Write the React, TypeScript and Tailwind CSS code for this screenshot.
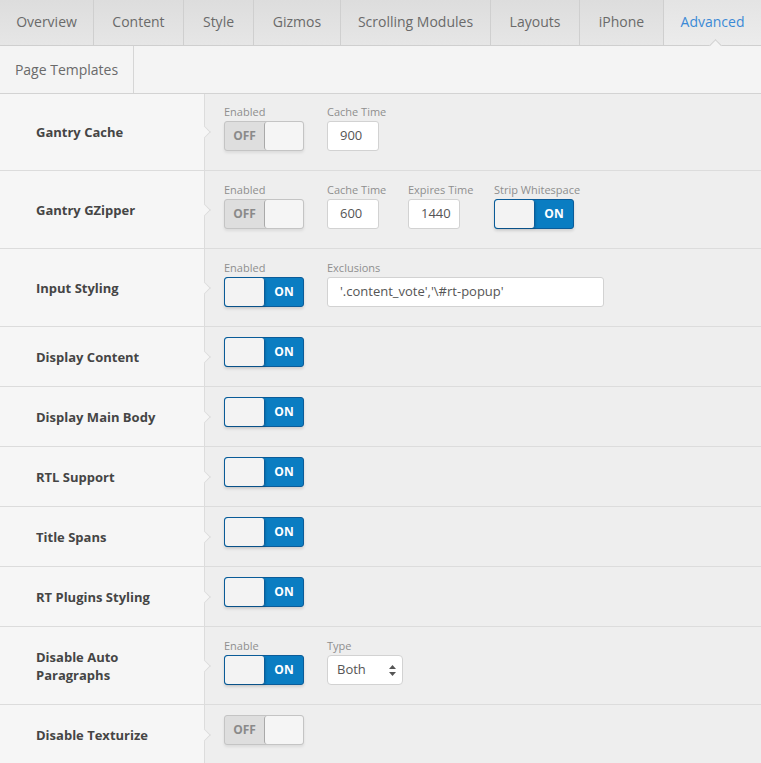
import React from "react";

const tabs = [
  { name: "Overview", w: "w-[94px]" },
  { name: "Content", w: "w-[90px]" },
  { name: "Style", w: "w-[70px]" },
  { name: "Gizmos", w: "w-[87px]" },
  { name: "Scrolling Modules", w: "w-[150px]" },
  { name: "Layouts", w: "w-[89px]" },
  { name: "iPhone", w: "w-[84px]" },
  { name: "Advanced", w: "flex-1" },
];

function Toggle({ on }: { on: boolean }) {
  if (on) {
    return (
      <div className="flex h-[30px] w-[80px] rounded-[3px] border border-[#0b5c99] bg-[#0a7dc2] shadow-[0_2px_3px_rgba(0,0,0,0.12)]">
        <div className="h-full w-[40px] rounded-[3px] border-r border-[#0b5c99] bg-[#f3f3f3] shadow-[1px_1px_2px_rgba(0,0,0,0.15)]" />
        <div className="flex flex-1 items-center justify-center text-[12px] font-bold text-white">ON</div>
      </div>
    );
  }
  return (
    <div className="flex h-[30px] w-[80px] rounded-[3px] border border-[#c4c4c4] bg-[#dedede] shadow-[0_2px_3px_rgba(0,0,0,0.08)]">
      <div className="flex w-[39px] items-center justify-center text-[12px] font-bold text-[#8a8a8a]">OFF</div>
      <div className="h-full flex-1 rounded-[3px] border-l border-[#a9a9a9] bg-[#f5f5f5]" />
    </div>
  );
}

function Field({ label, w, children }: { label: string; w: string; children: React.ReactNode }) {
  return (
    <div className={`flex ${w} shrink-0 flex-col items-start`}>
      <span className="mb-[2px] whitespace-nowrap text-[11px] leading-[15px] text-[#8f8f8f]">{label}</span>
      {children}
    </div>
  );
}

function TextBox({ value, w }: { value: string; w: string }) {
  return (
    <div className={`flex h-[30px] ${w} items-center rounded-[3px] border border-[#d2d2d2] bg-white pl-[12px] text-[13px] text-[#555]`}>
      {value}
    </div>
  );
}

function Row({ label, h, pt = "pt-[10px]", children }: { label: React.ReactNode; h: string; pt?: string; children: React.ReactNode }) {
  return (
    <div className={`flex ${h} border-b border-[#dcdcdc]`}>
      <div className="relative flex w-[205px] shrink-0 items-center border-r border-[#dcdcdc] bg-[#f6f6f6] pl-[36px] pr-4 text-[13px] font-bold leading-[18px] text-[#454545]">
        {label}
        <div className="absolute right-[-5px] top-1/2 h-[9px] w-[9px] -translate-y-1/2 rotate-45 border-r border-t border-[#dcdcdc] bg-[#f6f6f6]" />
      </div>
      <div className={`flex flex-1 items-start bg-[#eeeeee] pl-[19px] ${pt}`}>{children}</div>
    </div>
  );
}

export default function App() {
  return (
    <div className="w-[761px] bg-[#eeeeee] font-['Open_Sans',sans-serif]">
      <div className="flex h-[46px] border-b border-[#d0d0d0] bg-gradient-to-b from-[#dddddd] to-[#e6e6e6]">
        {tabs.map((t) => {
          const active = t.name === "Advanced";
          return (
            <div
              key={t.name}
              className={`relative flex ${t.w} items-center justify-center pb-[2px] text-[14px] ${
                active
                  ? "bg-gradient-to-b from-[#e4e4e4] to-[#ececec] text-[#3b8ad6]"
                  : "border-r border-[#cfcfcf] text-[#6a6a6a]"
              }`}
            >
              {t.name}
              {active && (
                <div className="absolute bottom-[-5px] left-[47px] h-[9px] w-[9px] rotate-45 border-l border-t border-[#d0d0d0] bg-[#f4f4f4]" />
              )}
            </div>
          );
        })}
      </div>
      <div className="flex h-[48px] border-b border-[#d3d3d3] bg-[#f4f4f4] shadow-[0_1px_2px_rgba(0,0,0,0.06)]">
        <div className="flex w-[134px] items-center justify-center border-r border-[#d6d6d6] pb-[1px] text-[14px] text-[#6a6a6a]">Page Templates</div>
      </div>

      <Row label="Gantry Cache" h="h-[77px]">
        <Field label="Enabled" w="w-[103px]"><Toggle on={false} /></Field>
        <Field label="Cache Time" w="w-[81px]"><TextBox value="900" w="w-[52px]" /></Field>
      </Row>
      <Row label="Gantry GZipper" h="h-[78px]" pt="pt-[11px]">
        <Field label="Enabled" w="w-[103px]"><Toggle on={false} /></Field>
        <Field label="Cache Time" w="w-[81px]"><TextBox value="600" w="w-[52px]" /></Field>
        <Field label="Expires Time" w="w-[86px]"><TextBox value="1440" w="w-[52px]" /></Field>
        <Field label="Strip Whitespace" w="w-[100px]"><Toggle on /></Field>
      </Row>
      <Row label="Input Styling" h="h-[78px]" pt="pt-[11px]">
        <Field label="Enabled" w="w-[103px]"><Toggle on /></Field>
        <Field label="Exclusions" w="w-[277px]"><TextBox value="'.content_vote','\#rt-popup'" w="w-[277px]" /></Field>
      </Row>
      <Row label="Display Content" h="h-[60px]"><Toggle on /></Row>
      <Row label="Display Main Body" h="h-[60px]"><Toggle on /></Row>
      <Row label="RTL Support" h="h-[60px]"><Toggle on /></Row>
      <Row label="Title Spans" h="h-[60px]"><Toggle on /></Row>
      <Row label="RT Plugins Styling" h="h-[60px]"><Toggle on /></Row>
      <Row label={<span>Disable Auto<br />Paragraphs</span>} h="h-[78px]" pt="pt-[11px]">
        <Field label="Enable" w="w-[103px]"><Toggle on /></Field>
        <Field label="Type" w="w-[76px]">
          <div className="flex h-[30px] w-[76px] items-center justify-between rounded-[4px] border border-[#d2d2d2] bg-white pl-[9px] pr-[6px] text-[13px] text-[#555]">
            Both
            <svg width="7" height="11" viewBox="0 0 7 11">
              <path d="M3.5 0L7 4H0z" fill="#555" />
              <path d="M3.5 11L7 7H0z" fill="#555" />
            </svg>
          </div>
        </Field>
      </Row>
      <Row label="Disable Texturize" h="h-[60px]"><Toggle on={false} /></Row>
    </div>
  );
}
